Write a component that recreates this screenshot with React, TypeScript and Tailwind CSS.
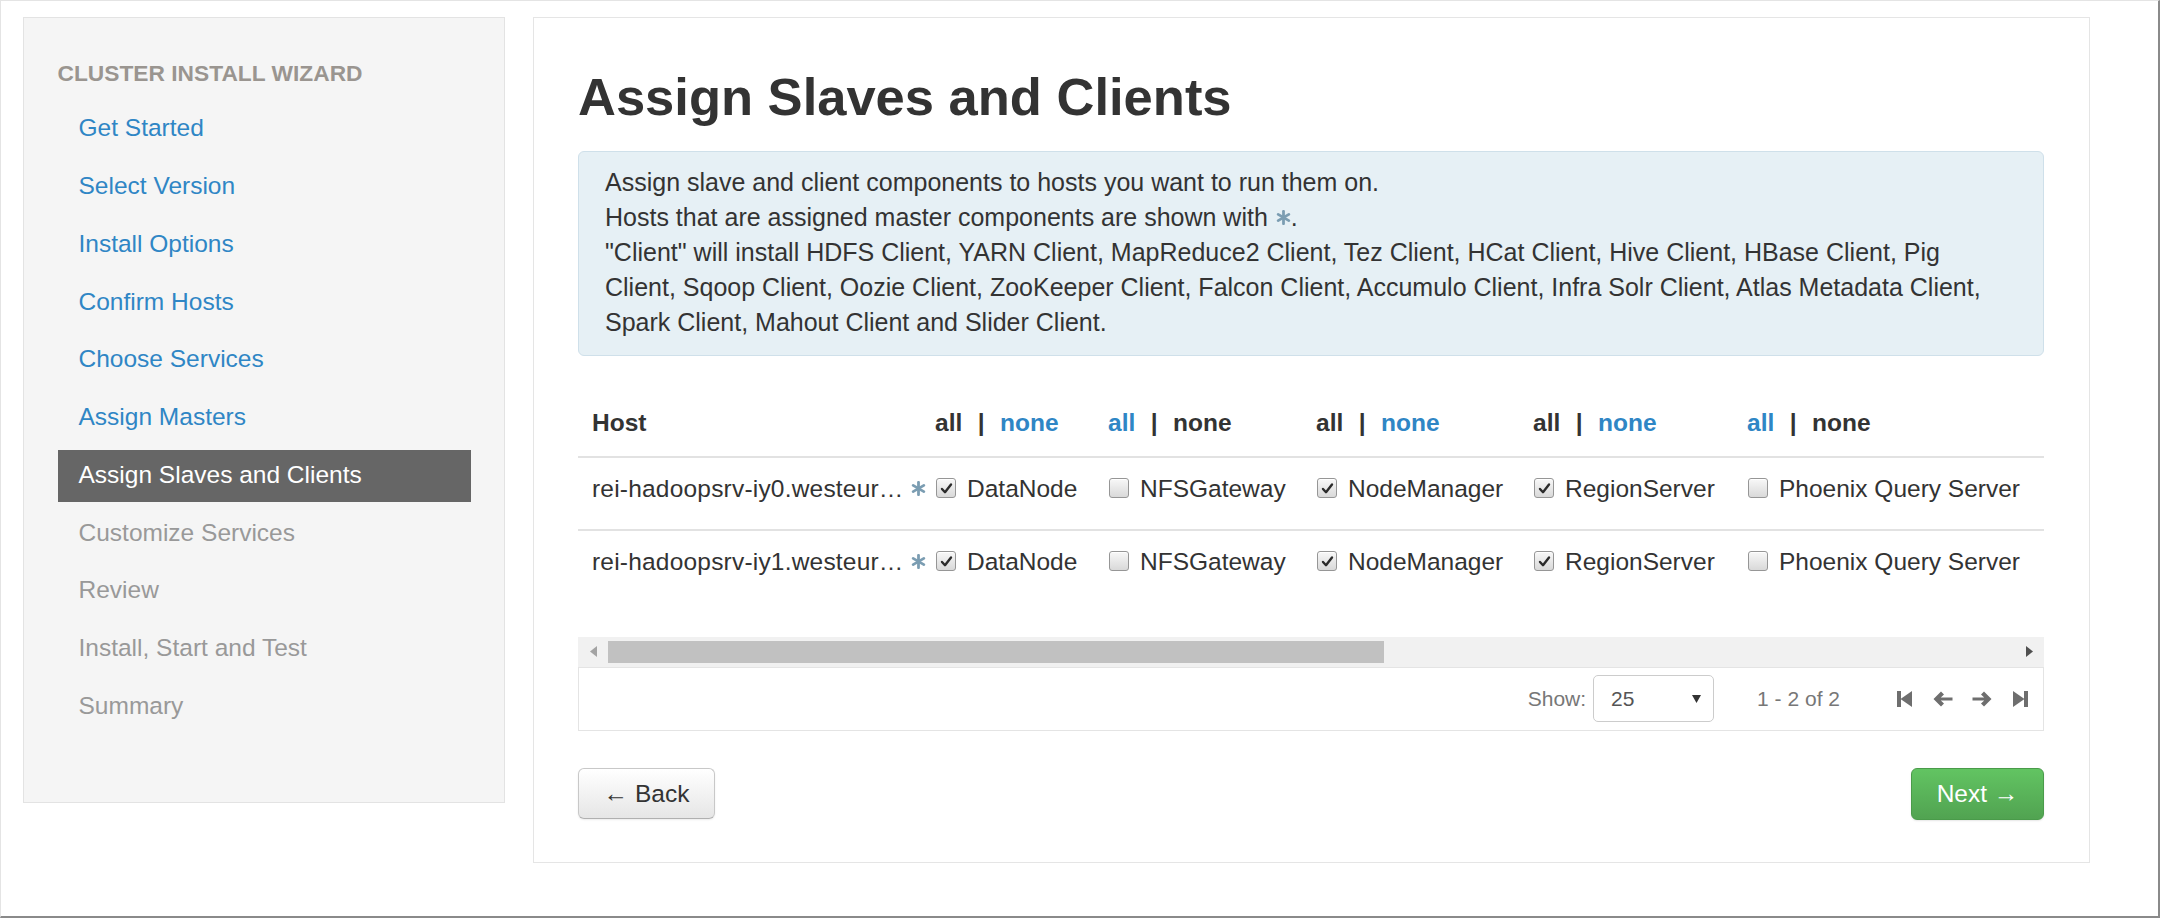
import React from "react";

const font = "font-['Liberation_Sans',Arial,sans-serif]";

function Asterisk({ size = 14, color = "#7b9db2" }: { size?: number; color?: string }) {
  return (
    <svg width={size} height={size} viewBox="0 0 14 14" className="inline-block">
      <g stroke={color} strokeWidth="2.6" strokeLinecap="round">
        <line x1="7" y1="1.2" x2="7" y2="12.8" />
        <line x1="2" y1="4.1" x2="12" y2="9.9" />
        <line x1="2" y1="9.9" x2="12" y2="4.1" />
      </g>
    </svg>
  );
}

function CheckBox({ checked }: { checked: boolean }) {
  return (
    <span className="inline-flex w-[20px] h-[20px] shrink-0 items-center justify-center rounded-[3px] border border-[#969696] bg-gradient-to-b from-[#f8f8f8] to-[#d9d9d9] shadow-[inset_0_1px_0_#fff]">
      {checked && (
        <svg width="13" height="13" viewBox="0 0 13 13">
          <path d="M2 7 L5 10.2 L11 2.5" fill="none" stroke="#2b2b2b" strokeWidth="2.4" strokeLinecap="round" strokeLinejoin="round" />
        </svg>
      )}
    </span>
  );
}

const navItems: { label: string; state: "done" | "active" | "todo" }[] = [
  { label: "Get Started", state: "done" },
  { label: "Select Version", state: "done" },
  { label: "Install Options", state: "done" },
  { label: "Confirm Hosts", state: "done" },
  { label: "Choose Services", state: "done" },
  { label: "Assign Masters", state: "done" },
  { label: "Assign Slaves and Clients", state: "active" },
  { label: "Customize Services", state: "todo" },
  { label: "Review", state: "todo" },
  { label: "Install, Start and Test", state: "todo" },
  { label: "Summary", state: "todo" },
];

function AllNone({ allLink }: { allLink: boolean }) {
  return (
    <span className="inline-flex items-center font-bold">
      <span className={allLink ? "text-[#2f86c5]" : "text-[#333]"}>all</span>
      <span className="mx-[15.5px] text-[#333]">|</span>
      <span className={allLink ? "text-[#333]" : "text-[#2f86c5]"}>none</span>
    </span>
  );
}

const components = [
  { name: "DataNode", checked: true, allLink: false },
  { name: "NFSGateway", checked: false, allLink: true },
  { name: "NodeManager", checked: true, allLink: false },
  { name: "RegionServer", checked: true, allLink: false },
  { name: "Phoenix Query Server", checked: false, allLink: true },
];

const hosts = ["rei-hadoopsrv-iy0.westeur…", "rei-hadoopsrv-iy1.westeur…"];

function StepBack({ flip }: { flip?: boolean }) {
  return (
    <svg width="15" height="16" viewBox="0 0 15 16" style={flip ? { transform: "scaleX(-1)" } : undefined}>
      <rect x="0" y="0" width="4" height="16" fill="#6e6e6e" />
      <polygon points="15,0 3.5,8 15,16" fill="#6e6e6e" />
    </svg>
  );
}

function ArrowLeft({ flip }: { flip?: boolean }) {
  return (
    <svg width="20" height="16" viewBox="0 0 20 16" style={flip ? { transform: "scaleX(-1)" } : undefined}>
      <path d="M8 0.5 L11 3.5 L7.8 6.5 L19.5 6.5 L19.5 9.5 L7.8 9.5 L11 12.5 L8 15.5 L0.5 8 Z" fill="#6e6e6e" />
    </svg>
  );
}

export default function App() {
  return (
    <div className={`${font} w-[2160px] h-[918px] bg-white border-t border-l border-[#e4e4e4] border-r-2 border-b-2 border-r-[#8a8a8a] border-b-[#8a8a8a] box-border overflow-hidden`}>
      <div className="flex items-start pt-[16px] pl-[22px]">
        {/* Sidebar */}
        <div className="w-[482px] h-[786px] shrink-0 border border-[#e3e3e3] bg-[#f5f5f5] pt-[38.3px] px-[33.5px]">
          <div className="text-[22.75px] leading-[35px] font-bold text-[#9a9590] uppercase whitespace-nowrap">
            Cluster Install Wizard
          </div>
          <div className="mt-[12px] flex flex-col gap-[5.75px]">
            {navItems.map((it) => (
              <div
                key={it.label}
                className={`h-[52px] pl-[21px] pt-[7px] text-[24.5px] leading-[35px] whitespace-nowrap ${
                  it.state === "active"
                    ? "bg-[#666666] text-white"
                    : it.state === "done"
                    ? "text-[#2f86c5]"
                    : "text-[#999999]"
                }`}
              >
                {it.label}
              </div>
            ))}
          </div>
        </div>

        {/* Main panel */}
        <div className="ml-[28px] w-[1557px] h-[846px] shrink-0 border border-[#e5e5e5] bg-white pt-[52.5px] pl-[44px] pr-[45px]">
          <h2 className="text-[52.5px] leading-[52.5px] font-bold text-[#333]">Assign Slaves and Clients</h2>

          <div className="mt-[27.7px] h-[205px] rounded-[6px] border border-[#cfe0ea] bg-[#e6f0f5] pl-[26px] pt-[13.7px] text-[25px] leading-[35px] text-[#333] whitespace-nowrap">
            <div>Assign slave and client components to hosts you want to run them on.</div>
            <div className="flex items-center">
              Hosts that are assigned master components are shown with
              <span className="ml-[8px] inline-flex"><Asterisk size={15} /></span>.
            </div>
            <div>"Client" will install HDFS Client, YARN Client, MapReduce2 Client, Tez Client, HCat Client, Hive Client, HBase Client, Pig</div>
            <div>Client, Sqoop Client, Oozie Client, ZooKeeper Client, Falcon Client, Accumulo Client, Infra Solr Client, Atlas Metadata Client,</div>
            <div>Spark Client, Mahout Client and Slider Client.</div>
          </div>

          {/* Table */}
          <div className="mt-[49.7px] text-[24.5px] leading-[35px] text-[#333]">
            <div className="grid grid-cols-[357px_173px_208px_217px_214px_297px] pb-[15.3px] border-b-2 border-[#e2e2e2]">
              <div className="pl-[14px] font-bold">Host</div>
              {components.map((c) => (
                <div key={c.name}>
                  <AllNone allLink={c.allLink} />
                </div>
              ))}
            </div>
            {hosts.map((h, i) => (
              <div
                key={h}
                className={`grid grid-cols-[357px_173px_208px_217px_214px_297px] pt-[13px] pb-[23px] ${
                  i > 0 ? "border-t-2 border-[#e2e2e2]" : ""
                }`}
              >
                <div className="pl-[14px] flex items-center whitespace-nowrap">
                  <span className="tracking-[0.2px]">{h}</span>
                  <span className="ml-[7px] inline-flex"><Asterisk size={15} /></span>
                </div>
                {components.map((c) => (
                  <div key={c.name} className="flex items-center whitespace-nowrap">
                    <span className="ml-[1px] inline-flex"><CheckBox checked={c.checked} /></span>
                    <span className="ml-[11px]">{c.name}</span>
                  </div>
                ))}
              </div>
            ))}
          </div>

          {/* Scrollbar */}
          <div className="mt-[35px] h-[30px] bg-[#f1f1f1] flex items-center">
            <div className="w-[30px] h-full flex items-center justify-center">
              <svg width="7" height="11" viewBox="0 0 7 11"><polygon points="7,0 0,5.5 7,11" fill="#a3a3a3" /></svg>
            </div>
            <div className="w-[776px] h-[22px] bg-[#c1c1c1]" />
            <div className="flex-1" />
            <div className="w-[30px] h-full flex items-center justify-center">
              <svg width="7" height="11" viewBox="0 0 7 11"><polygon points="0,0 7,5.5 0,11" fill="#505050" /></svg>
            </div>
          </div>

          {/* Pagination */}
          <div className="h-[64px] border border-[#e4e4e4] flex items-center justify-end pr-[15px] text-[21px] text-[#777]">
            <span>Show:</span>
            <div className="ml-[7px] w-[121px] h-[47px] rounded-[5px] border border-[#cccccc] bg-white flex items-center justify-between pl-[17px] pr-[12px] text-[#555]">
              <span>25</span>
              <svg width="9" height="9" viewBox="0 0 9 9"><polygon points="0,1 9,1 4.5,9" fill="#333" /></svg>
            </div>
            <span className="ml-[43px]">1 - 2 of 2</span>
            <div className="ml-[57px] flex items-center">
              <StepBack />
              <span className="ml-[21px] inline-flex"><ArrowLeft /></span>
              <span className="ml-[19px] inline-flex"><ArrowLeft flip /></span>
              <span className="ml-[21px] inline-flex"><StepBack flip /></span>
            </div>
          </div>

          {/* Buttons */}
          <div className="mt-[37px] flex justify-between">
            <div className="w-[137px] h-[51px] rounded-[6px] border border-[#c8c8c8] border-b-[#b0b0b0] bg-gradient-to-b from-white to-[#e6e6e6] flex items-center justify-center text-[24.5px] leading-[35px] text-[#333] shadow-[0_1px_2px_rgba(0,0,0,0.08)]">
              ← Back
            </div>
            <div className="w-[133px] h-[52px] rounded-[6px] border border-[#4a9b4a] bg-gradient-to-b from-[#62c462] to-[#51a351] flex items-center justify-center text-[24.5px] leading-[35px] text-white shadow-[0_1px_2px_rgba(0,0,0,0.1)]">
              Next →
            </div>
          </div>
        </div>
      </div>
    </div>
  );
}
